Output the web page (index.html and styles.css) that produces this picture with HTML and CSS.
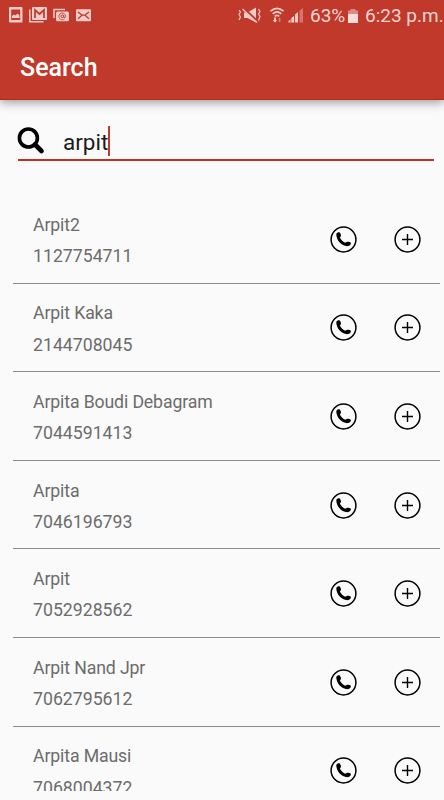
FILE: index.html
```
<!DOCTYPE html>
<html lang="en">
<head>
<meta charset="utf-8">
<title>Search</title>
<link rel="stylesheet" href="styles.css">
</head>
<body>
<svg class="defs" aria-hidden="true">
  <symbol id="call" viewBox="0 0 27 27">
    <circle cx="13.5" cy="13.5" r="12.4" fill="none" stroke="#000" stroke-width="1.5"/>
    <path d="M6.3 7.8C7.2 6.4 9 5.8 9.9 6.7C10.8 7.8 11.3 9.4 10.8 10.2L9.9 11.4C10.8 13.6 12.7 15.4 15.2 16.7L16.6 15.9C17.8 15.5 19.8 15.8 20.8 16.8C21.2 18.1 20.1 19.7 18.3 20.1C12.2 20.9 6 14.5 6.3 7.8Z"/>
  </symbol>
  <symbol id="add" viewBox="0 0 27 27">
    <circle cx="13.5" cy="13.5" r="12.4" fill="none" stroke="#000" stroke-width="1.5"/>
    <path d="M8 13.5H19M13.5 8V19" fill="none" stroke="#000" stroke-width="1.4"/>
  </symbol>
</svg>
<header class="header">
  <div class="status">
    <svg class="notices" viewBox="0 0 100 30" fill="#f1cbc7">
      <path fill-rule="evenodd" d="M10 7h11.5q1 0 1 1v13.500q0 1-1 1h-11.500q-1 0-1-1v-13.500q0-1 1-1ZM11.200 9.500v10.500h9v-10.500ZM12 18v-2l2-1.500 1.500 1 2-2 2 2V18Z"/>
      <path d="M29.800 9.500V21.700H43.500" fill="none" stroke="#f1cbc7" stroke-width="1.500"/>
      <rect x="32" y="7" width="15" height="13" rx="1"/>
      <path d="M35 18V10L39.500 14L44 10V18" fill="none" stroke="#c0392b" stroke-width="1.700"/>
      <path d="M54 18V9.500H65" fill="none" stroke="#f1cbc7" stroke-width="1.500"/>
      <rect x="56" y="11.500" width="13" height="9.800" rx="1.500"/>
      <circle cx="62.300" cy="16.300" r="1.300" fill="none" stroke="#c0392b"/>
      <path d="M64.700 18.800A3.400 3.400 0 1 1 65.700 16.300Q65.500 18 63.800 17.500V14.800" fill="none" stroke="#c0392b" stroke-width=".8"/>
      <rect x="76" y="9.300" width="15" height="12" rx="1"/>
      <path d="M78 12L82 15.100H85L89 12M78 18.800L82 15.300M89 18.800L85 15.300" fill="none" stroke="#c0392b" stroke-width="1.300"/>
    </svg>
    <svg class="signals" viewBox="0 0 68 30" fill="#f1cbc7">
      <path d="M6 12.500H9.500L18 7.500V22.500L9.500 18H6Z"/>
      <path d="M5 8L20 22" stroke="#c0392b" stroke-width="2.600"/>
      <path d="M4.500 9L19 22.500M1 10l1.500 2-1.500 2.500 1.500 2.500-1.500 3M20.500 9l1.500 2.500-1.500 2.500 1.500 2.500-1.500 4" fill="none" stroke="#f1cbc7" stroke-width="1.200"/>
      <path d="M32.500 11.200Q39 5.500 45.500 11.200M34.700 13.800Q39 10 43.300 13.800M36.800 16.300Q39 14.500 41.200 16.300" fill="none" stroke="#f1cbc7" stroke-width="1.700"/>
      <path d="M36 17.500h2V20h1.200l-2.200 2.700-2.200-2.700H36Z"/>
      <path opacity=".5" d="M41 22v-2.500h-1l1.500-2 1.700 2H42.300V22Z"/>
      <path d="M50.500 22.500v-1.500l2-1.500v3ZM53.300 22.500V18l2.800-2v6.500ZM57 22.500V14.500l3-2.500v10.500Z"/>
      <path opacity=".42" d="M61.500 22.500V10.500L65 8V22.500Z"/>
    </svg>
    <span class="percent">63%</span>
    <svg class="battery" viewBox="0 0 12 16" fill="#f5dddb">
      <path opacity=".5" d="M3.500 1h5v1.500H11V7H1V2.500H3.500Z"/><path d="M1 6h10v9H1Z"/>
    </svg>
    <span class="clock">6:23 p.m.</span>
  </div>
  <h1 class="title">Search</h1>
</header>
<main class="content">
  <div class="search">
    <svg class="lens" viewBox="0 0 28 28" fill="none" stroke="#000">
      <circle cx="11.400" cy="11" r="9" stroke-width="3.600"/>
      <path d="M18 17.500L24.500 24" stroke-width="4.600" stroke-linecap="round"/>
    </svg>
    <span class="query">arpit</span><span class="caret"></span>
  </div>
  <ul class="list">
    <li class="row"><div class="info"><span class="name">Arpit2</span><span>1127754711</span></div><svg class="icon"><use href="#call"/></svg><svg class="icon"><use href="#add"/></svg></li>
    <li class="row"><div class="info"><span class="name">Arpit Kaka</span><span>2144708045</span></div><svg class="icon"><use href="#call"/></svg><svg class="icon"><use href="#add"/></svg></li>
    <li class="row"><div class="info"><span class="name">Arpita Boudi Debagram</span><span>7044591413</span></div><svg class="icon"><use href="#call"/></svg><svg class="icon"><use href="#add"/></svg></li>
    <li class="row"><div class="info"><span class="name">Arpita</span><span>7046196793</span></div><svg class="icon"><use href="#call"/></svg><svg class="icon"><use href="#add"/></svg></li>
    <li class="row"><div class="info"><span class="name">Arpit</span><span>7052928562</span></div><svg class="icon"><use href="#call"/></svg><svg class="icon"><use href="#add"/></svg></li>
    <li class="row"><div class="info"><span class="name">Arpit Nand Jpr</span><span>7062795612</span></div><svg class="icon"><use href="#call"/></svg><svg class="icon"><use href="#add"/></svg></li>
    <li class="row"><div class="info"><span class="name">Arpita Mausi</span><span>7068004372</span></div><svg class="icon"><use href="#call"/></svg><svg class="icon"><use href="#add"/></svg></li>
  </ul>
</main>
</body>
</html>
```
FILE: styles.css
```
* { box-sizing: border-box; }
body {
  margin: 0;
  height: 800px;
  overflow: hidden;
  display: flex;
  flex-direction: column;
  background: #fafafa;
  font-family: Roboto, "Liberation Sans", sans-serif;
}
.defs { display: none; }
.header {
  flex: none;
  height: 100px;
  background: #c0392b;
  border-bottom: 1px solid #b5291b;
  box-shadow: 0 2px 10px rgba(0, 0, 0, .42);
}
.status {
  height: 34px;
  display: flex;
  align-items: flex-start;
  color: #f5d5d2;
  font-size: 19px;
  line-height: 32px;
  white-space: nowrap;
}
.notices { width: 100px; height: 30px; }
.signals { width: 68px; height: 30px; margin-left: 138px; }
.percent { width: 37px; margin-left: 4px; }
.battery { width: 12px; height: 16px; margin-top: 8px; }
.clock { margin-left: 6px; }
.title {
  margin: 0;
  padding-left: 20px;
  font-size: 25px;
  line-height: 67px;
  font-weight: 500;
  color: #fff;
}
.content { flex: 1; min-height: 0; display: flex; flex-direction: column; }
.search {
  flex: none;
  display: flex;
  align-items: center;
  height: 36px;
  margin: 25px 10px 0 18px;
  border-bottom: 2px solid #c0321f;
}
.lens { width: 28px; height: 28px; margin: -2px 0 0 -1px; }
.query {
  margin-left: 18px;
  font-size: 22.500px;
  line-height: 34px;
  color: #1b1b1b;
}
.caret { width: 2px; height: 30px; margin-top: -3px; background: #c0392b; }
.list {
  height: 596px;
  margin: 34px 4px 0 13px;
  padding: 0;
  overflow: hidden;
  list-style: none;
}
.row {
  height: 88.600px;
  display: flex;
  align-items: center;
  padding: 1px 19px 0 20px;
  border-bottom: 1px solid #8b8b8b;
}
.info {
  flex: 1;
  display: flex;
  flex-direction: column;
  padding-top: 3.500px;
  font-size: 17.700px;
  line-height: 31.300px;
  color: #6c6c6c;
}
.name { letter-spacing: -.13px; }
.icon { width: 27px; height: 27px; }
.icon + .icon { margin-left: 37px; }
```
